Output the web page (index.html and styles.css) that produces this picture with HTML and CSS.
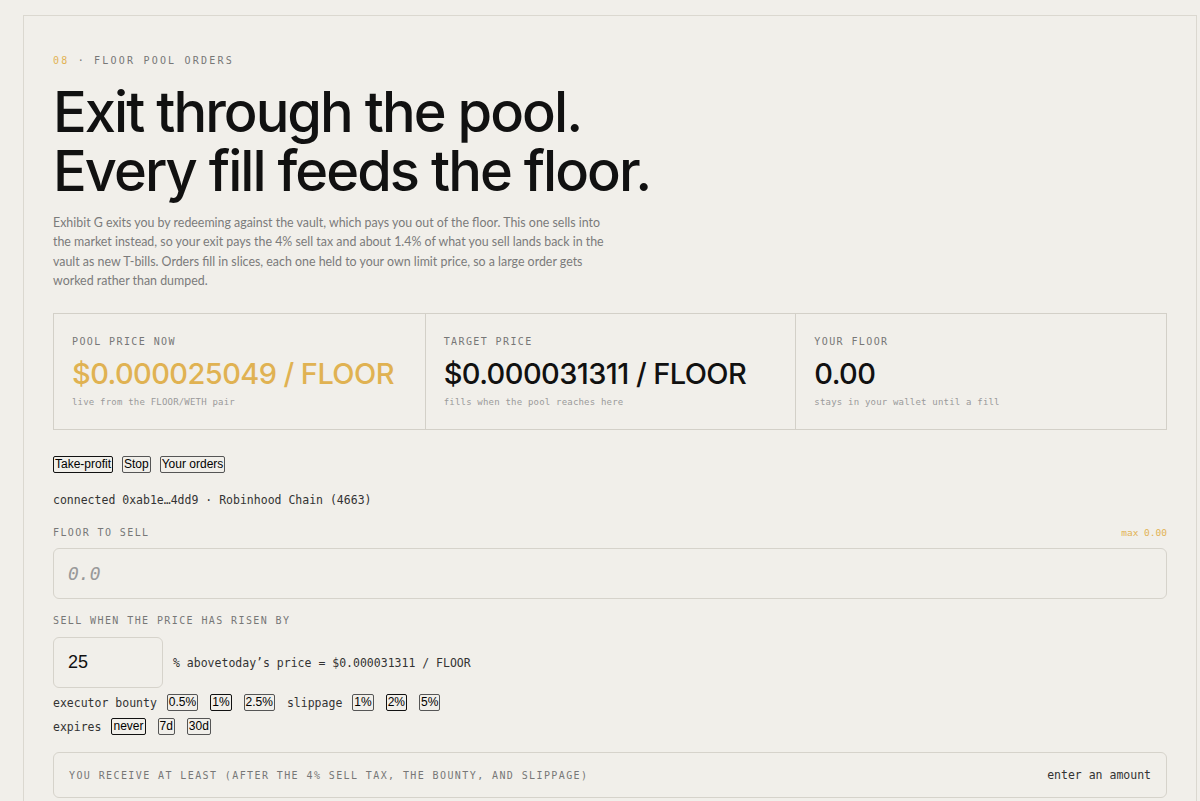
FILE: index.html
```html
<!DOCTYPE html>
<html lang="en">
<head>
    <meta charset="UTF-8">
    <meta name="viewport" content="width=device-width, initial-scale=1.0">
    <title>Floor Pool Orders</title>
    <link rel="stylesheet" href="styles.css">
</head>
<body>
    <section class="panel">
        <div class="eyebrow"><span class="num">08</span> · FLOOR POOL ORDERS</div>

        <h1>Exit through the pool.<br>Every fill feeds the floor.</h1>

        <p class="lede">Exhibit G exits you by redeeming against the vault, which pays you out of the floor. This one sells into the market instead, so your exit pays the 4% sell tax and about 1.4% of what you sell lands back in the vault as new T-bills. Orders fill in slices, each one held to your own limit price, so a large order gets worked rather than dumped.</p>

        <div class="stats">
            <div class="stat">
                <div class="stat-label">POOL PRICE NOW</div>
                <div class="stat-value gold">$0.000025049 / FLOOR</div>
                <div class="stat-note">live from the FLOOR/WETH pair</div>
            </div>
            <div class="stat">
                <div class="stat-label">TARGET PRICE</div>
                <div class="stat-value">$0.000031311 / FLOOR</div>
                <div class="stat-note">fills when the pool reaches here</div>
            </div>
            <div class="stat">
                <div class="stat-label">YOUR FLOOR</div>
                <div class="stat-value">0.00</div>
                <div class="stat-note">stays in your wallet until a fill</div>
            </div>
        </div>

        <div class="tabs">
            <button class="selected">Take-profit</button>
            <button>Stop</button>
            <button>Your orders</button>
        </div>

        <div class="wallet">connected 0xab1e…4dd9 · Robinhood Chain (4663)</div>

        <form id="orderForm">
            <div class="field-head">
                <label for="amount" class="field-label">FLOOR TO SELL</label>
                <span class="max">max 0.00</span>
            </div>
            <input type="text" id="amount" class="amount" placeholder="0.0">

            <label for="rise" class="field-label">SELL WHEN THE PRICE HAS RISEN BY</label>
            <div class="rise-row">
                <input type="text" id="rise" class="rise" value="25">
                <span class="mono">% abovetoday’s price = $0.000031311 / FLOOR</span>
            </div>

            <div class="options">
                <span class="mono">executor bounty</span>
                <button type="button">0.5%</button>
                <button type="button" class="selected">1%</button>
                <button type="button">2.5%</button>
                <span class="mono">slippage</span>
                <button type="button">1%</button>
                <button type="button" class="selected">2%</button>
                <button type="button">5%</button>
            </div>
            <div class="options">
                <span class="mono">expires</span>
                <button type="button" class="selected">never</button>
                <button type="button">7d</button>
                <button type="button">30d</button>
            </div>

            <div class="receive">
                <span class="field-label">YOU RECEIVE AT LEAST (AFTER THE 4% SELL TAX, THE BOUNTY, AND SLIPPAGE)</span>
                <span class="mono">enter an amount</span>
            </div>
        </form>
    </section>
</body>
</html>
```

FILE: styles.css
```css
body {
    margin: 0;
    padding: 15px 3px 0 23px;
    background-color: #f1efea;
    font-family: Inter, Arial, sans-serif;
    color: #111;
}
.panel {
    border: 1px solid #dbd8d0;
    border-bottom: none;
    padding: 39px 29px 40px;
}
.eyebrow {
    font-family: "DejaVu Sans Mono", monospace;
    font-size: 10px;
    letter-spacing: 2.2px;
    color: #777;
}
.eyebrow .num {
    color: #e2b355;
}
h1 {
    font-size: 56px;
    font-weight: 500;
    line-height: 59px;
    letter-spacing: -0.035em;
    margin: 17px 0 12px;
}
.lede {
    max-width: 557px;
    font-family: Lato, "Open Sans", sans-serif;
    font-size: 12.4px;
    line-height: 19.3px;
    color: #7b7b7b;
    margin: 0 0 23px;
}
.stats {
    display: grid;
    grid-template-columns: repeat(3, 1fr);
    border: 1px solid #d3d0c8;
}
.stat {
    padding: 22px 18px 22px;
}
.stat + .stat {
    border-left: 1px solid #d3d0c8;
}
.stat-label, .field-label {
    font-family: "DejaVu Sans Mono", monospace;
    font-size: 10px;
    letter-spacing: 1.4px;
    color: #777;
}
.stat-value {
    font-size: 29px;
    font-weight: 500;
    letter-spacing: -0.02em;
    margin: 9px 0 6px;
}
.stat-value.gold {
    color: #e0b252;
}
.stat-note {
    font-family: "DejaVu Sans Mono", monospace;
    font-size: 9px;
    letter-spacing: 0.2px;
    color: #9a9a9a;
}
button {
    font-family: Arial, "Liberation Sans", sans-serif;
    font-size: 12px;
    color: #000;
    background: transparent;
    border: 1px solid #555;
    border-radius: 2px;
    padding: 0 1px;
    height: 17px;
    line-height: 15px;
    cursor: pointer;
}
button.selected {
    border-color: #111;
}
.tabs {
    display: flex;
    gap: 9px;
    margin-top: 26px;
}
.wallet, .mono {
    font-family: "DejaVu Sans Mono", monospace;
    font-size: 11.5px;
    color: #333;
}
.wallet {
    margin: 20px 0 20px;
}
.field-head {
    display: flex;
    justify-content: space-between;
    align-items: baseline;
}
.max {
    font-family: "DejaVu Sans Mono", monospace;
    font-size: 9.5px;
    color: #e2b355;
}
.amount, .rise {
    display: block;
    box-sizing: border-box;
    height: 51px;
    border: 1px solid #d6d3cb;
    border-radius: 6px;
    background: transparent;
    padding: 0 14px;
    font-size: 18px;
    color: #111;
}
.amount {
    width: 100%;
    margin: 10px 0 16px;
    font-family: "DejaVu Sans Mono", monospace;
}
.amount::placeholder {
    color: #999;
    font-style: italic;
}
.field-label {
    display: block;
}
.rise-row {
    display: flex;
    align-items: center;
    gap: 10px;
    margin: 11px 0 6px;
}
.rise {
    width: 110px;
    font-family: Arial, "Liberation Sans", sans-serif;
}
.options {
    display: flex;
    align-items: center;
    gap: 12px;
    margin-bottom: 7px;
}
.options .mono + button {
    margin-left: -2px;
}
.receive {
    display: flex;
    justify-content: space-between;
    align-items: center;
    margin-top: 17px;
    border: 1px solid #d6d3cb;
    border-radius: 6px;
    padding: 15px 15px;
    height: 14px;
}
```
